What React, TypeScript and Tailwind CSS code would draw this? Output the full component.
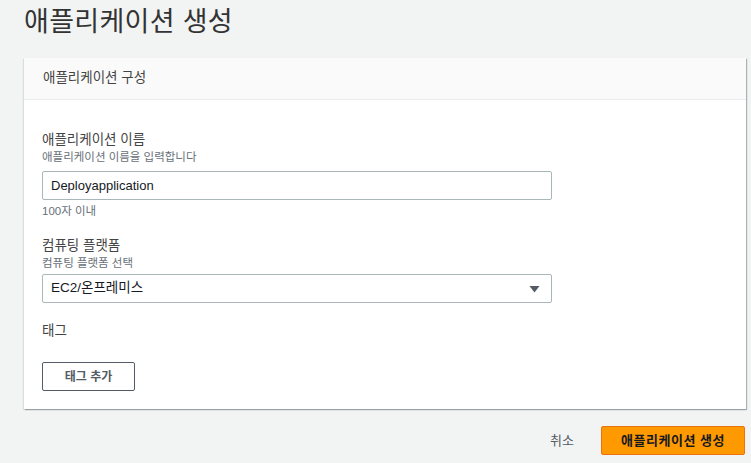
import React from 'react';

const FONT = "font-['Liberation_Sans','Noto_Sans_CJK_KR',sans-serif]";

export default function App() {
  return (
    <div className={`${FONT} min-h-[463px] w-[751px] bg-[#f2f3f3] text-[#16191f]`}>
      <div className="pl-[24px] pr-[6px] pt-[4px]">
        <h1 className="text-[27px] leading-[36px] text-[#333] tracking-[0.3px]">애플리케이션 생성</h1>

        {/* Card */}
        <div className="mt-[18px] bg-white shadow-[1px_1px_1px_0_rgba(0,28,36,0.3),-1px_1px_1px_0_rgba(0,28,36,0.1)] w-[722px]">
          <div className="h-[42px] flex items-center px-[19px] bg-[#fafafa] border-b border-[#eaeded] text-[13.5px] text-[#444]">
            애플리케이션 구성
          </div>

          <div className="px-[18px] pt-[31px] pb-[18px]">
            <div className="text-[13.5px] leading-[18px] text-[#444]">애플리케이션 이름</div>
            <div className="text-[11.5px] leading-[17px] text-[#687078]">애플리케이션 이름을 입력합니다</div>
            <input
              readOnly
              value="Deployapplication"
              className="mt-[5px] block w-[510px] h-[29px] rounded-[2px] border border-[#aab7b8] px-[8px] text-[13px] text-[#16191f] outline-none"
            />
            <div className="mt-[3px] text-[11.5px] leading-[16px] text-[#687078]">100자 이내</div>

            <div className="mt-[18px] text-[13.5px] leading-[18px] text-[#444]">컴퓨팅 플랫폼</div>
            <div className="text-[11.5px] leading-[17px] text-[#687078]">컴퓨팅 플랫폼 선택</div>
            <div className="mt-[2px] w-[510px] h-[29px] rounded-[2px] border border-[#aab7b8] px-[8px] flex items-center justify-between text-[13.5px] text-[#16191f]">
              <span>EC2/온프레미스</span>
              <svg width="11" height="8" viewBox="0 0 11 8" className="mr-[3px]">
                <path d="M0.5 1h10L5.5 7.5z" fill="#545b64" />
              </svg>
            </div>

            <div className="mt-[19px] text-[13.5px] leading-[18px] text-[#444]">태그</div>
            <button className="mt-[22px] w-[93px] h-[29px] rounded-[2px] border border-[#545b64] bg-white text-[12px] text-[#545b64] font-bold">
              태그 추가
            </button>
          </div>
        </div>

        {/* Actions */}
        <div className="mt-[17px] flex items-center justify-end w-[721px]">
          <span className="text-[13px] text-[#545b64] mr-[27px]">취소</span>
          <button className="w-[144px] h-[29px] rounded-[2px] bg-[#ff9900] border border-[#ec7211] text-[13px] font-bold text-[#16191f] tracking-[0.5px]">
            애플리케이션 생성
          </button>
        </div>
      </div>
    </div>
  );
}
